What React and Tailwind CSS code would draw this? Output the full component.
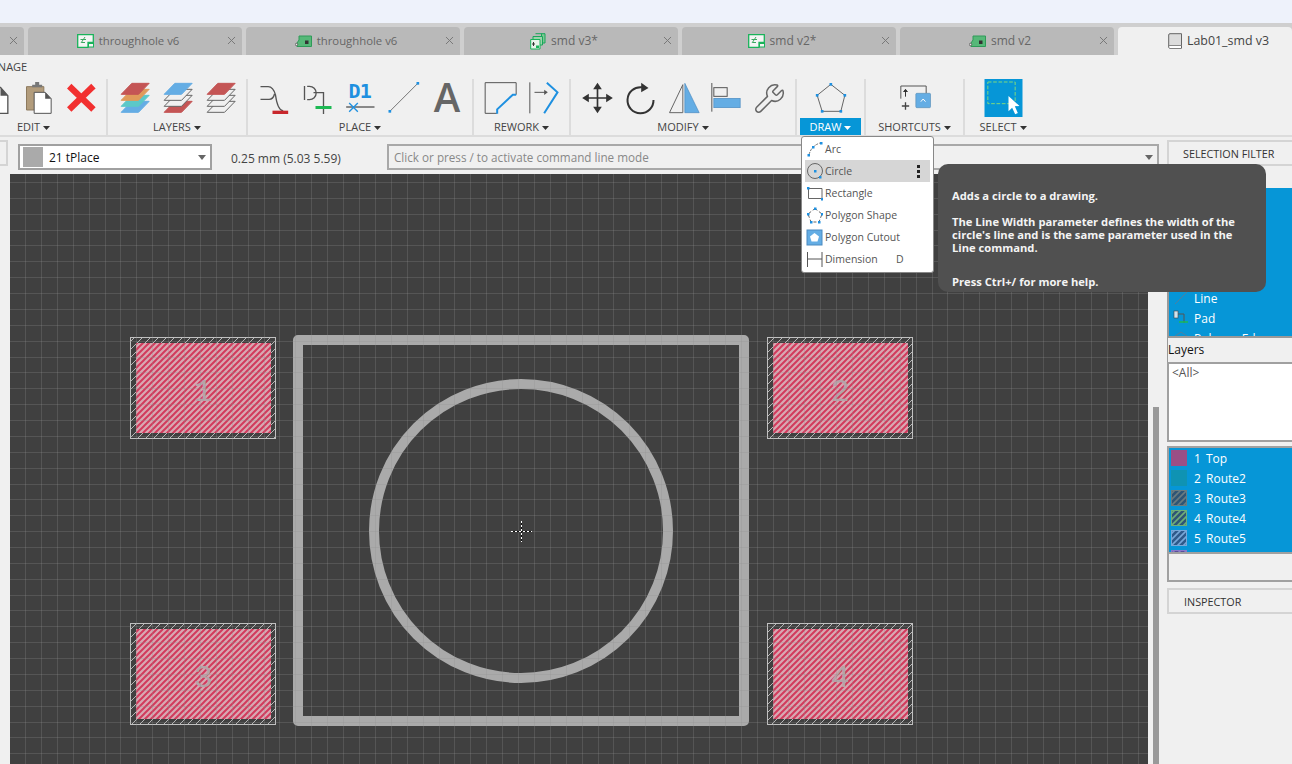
import { X, Wrench } from "lucide-react";

const blue = "#1e90e0";

function Caret({ color = "#333" }) {
  return (
    <svg width="7" height="4" viewBox="0 0 7 4" className="ml-[3px] shrink-0">
      <path d="M0 0H7L3.5 4Z" fill={color} />
    </svg>
  );
}

// icons are traced from a 3x crop, so ox is the crop's left edge in page px
function Icon({ cx, ox = 0, children }) {
  const vx = (cx - 21.5 - ox) * 3;
  return (
    <svg width="43" height="38" viewBox={`${vx} 237 129 114`} className="shrink-0 overflow-visible">
      {children}
    </svg>
  );
}

function Sheet({ x, y, fill }) {
  const d = `M${x + 32} ${y}H${x + 84}L${x + 52} ${y + 33}H${x}Z`;
  return <path d={d} fill={fill === "none" ? "#f0f0f0" : fill} stroke={fill === "none" ? "#666" : fill} strokeWidth="3" />;
}

function Square({ x, y, s = 8 }) {
  return <rect x={x - s / 2} y={y - s / 2} width={s} height={s} fill={blue} />;
}

function SchIcon() {
  return (
    <svg width="17" height="14" viewBox="0 0 17 14" className="shrink-0">
      <path d="M.7.7H16.3V8.5H11V13.3H.7Z" fill="#f4f4f4" stroke="#19b35a" strokeWidth="1.3" />
      <rect x="11.5" y="9.5" width="5" height="3.5" fill="#f4f4f4" stroke="#19b35a" />
      <path d="M4 9L8 3M3.5 5.5H9M5 8.5H8" stroke="#3aa860" strokeWidth="1" fill="none" />
    </svg>
  );
}

function BoardIcon() {
  return (
    <svg width="17" height="13" viewBox="0 0 17 13" className="shrink-0">
      <path d="M4 1H16.5V11.5H2V8L4 5Z" fill="#56b878" stroke="#2f9a58" />
      <rect x="10" y="5.5" width="3.5" height="3.5" fill="#333" />
      <circle cx="1.5" cy="9.5" r="1.2" fill="#eee" stroke="#444" strokeWidth=".7" />
    </svg>
  );
}

function StackIcon() {
  return (
    <svg width="16" height="17" viewBox="0 0 16 17" className="shrink-0">
      <path d="M5.5.7H15V10H11.5V.7" fill="#7dc893" stroke="#19a65a" />
      <path d="M3 3.5H12.5V12H3Z" fill="#9ed2ac" stroke="#19a65a" />
      <path d="M.7 6.5H10V16H.7Z" fill="#e8f3ea" stroke="#19b35a" />
      <path d="M3.5 9V13M2 11H5" stroke="#333" fill="none" />
      <rect x="6" y="12.5" width="3" height="2.5" fill="#19b35a" />
    </svg>
  );
}

function DocIcon() {
  return (
    <svg width="15" height="16" viewBox="0 0 15 16" className="shrink-0">
      <path d="M2 .7H13.5V15.3H2Q.7 15.3.7 14V2Q.7.7 2 .7Z" fill="#dcdcdc" stroke="#666" />
      <path d="M1 12.5H13.5" stroke="#888" />
      <rect x="1.5" y="13" width="11.5" height="2" fill="#fff" />
    </svg>
  );
}

const tabs = [
  { name: "", icon: null },
  { name: "throughhole v6", icon: <SchIcon />, long: true },
  { name: "throughhole v6", icon: <BoardIcon />, long: true },
  { name: "smd v3*", icon: <StackIcon /> },
  { name: "smd v2*", icon: <SchIcon /> },
  { name: "smd v2", icon: <BoardIcon /> },
];

function Tab({ name, icon, long }) {
  return (
    <div className="relative flex h-[28px] w-[214px] shrink-0 items-center justify-center gap-[5px] rounded-t-[4px] bg-[#b9b9b9] pr-[14px]">
      {icon}
      <span className={long ? "text-[11.35px] text-[#666]" : "text-[12px] text-[#666]"}>{name}</span>
      <X size={13} strokeWidth={1.8} className="absolute right-[4px] top-[7px] text-[#777]" />
    </div>
  );
}

function Group({ width, label, active, shift = 0, children }) {
  return (
    <div className="flex shrink-0 flex-col items-center border-r-2 border-[#dcdcdc] last:border-r-0" style={{ width }}>
      <div className="flex h-[39px] items-start justify-center" style={{ paddingLeft: shift }}>
        {children}
      </div>
      {active ? (
        <div className="flex h-[18px] w-[61px] items-center justify-center bg-[#0696d7] pt-px text-[11px] text-white">
          {label}
          <Caret color="#fff" />
        </div>
      ) : (
        <div className="flex h-[18px] items-center pt-px text-[11px] text-[#444]">
          {label}
          <Caret />
        </div>
      )}
    </div>
  );
}

function Ribbon() {
  return (
    <div className="h-[82px] shrink-0 overflow-hidden border-b-2 border-[#dcdcdc] bg-[#f0f0f0]">
      <div className="-ml-[19px] h-[24px] pt-[4px] text-[11px] text-[#444]">MANAGE</div>
      <div className="-ml-[39px] flex">
        <Group width={147} label="EDIT" shift={10}>
          <Icon cx={-5}>
            <path d="M-30 262H0L22 287V340H-30Z" fill="#fff" stroke="#555" strokeWidth="4" />
            <path d="M0 262L22 287H0Z" fill="#555" />
          </Icon>
          <Icon cx={38}>
            <path d="M78 260H130V330H78Z" fill="#b29c7c" stroke="#8d7a5e" strokeWidth="3" />
            <path d="M95 262V254H104V246H116V254H125V262Z" fill="#777" />
            <path d="M101 277H134L152 296V340H101Z" fill="#fff" stroke="#555" strokeWidth="3" />
            <path d="M134 277L152 296H134Z" fill="#555" />
          </Icon>
          <Icon cx={81}>
            <path d="M213 265L272 322M272 265L213 322" stroke="#f23030" strokeWidth="19" strokeLinecap="square" />
          </Icon>
        </Group>
        <Group width={140} label="LAYERS">
          <Icon cx={135}>
            <Sheet x={365} y={304} fill="#64ade4" />
            <Sheet x={365} y={286} fill="#5cc8c8" />
            <Sheet x={365} y={268} fill="#e09a5a" />
            <Sheet x={365} y={250} fill="#c45555" />
          </Icon>
          <Icon cx={178}>
            <Sheet x={494} y={304} fill="#c45555" />
            <Sheet x={494} y={286} fill="none" />
            <Sheet x={494} y={268} fill="none" />
            <Sheet x={494} y={250} fill="#64ade4" />
          </Icon>
          <Icon cx={221}>
            <Sheet x={623} y={304} fill="none" />
            <Sheet x={623} y={286} fill="none" />
            <Sheet x={623} y={268} fill="none" />
            <Sheet x={623} y={250} fill="#c45555" />
          </Icon>
        </Group>
        <Group width={226} label="PLACE">
          <Icon cx={273}>
            <path d="M777 260H800Q815 260 822 285Q828 330 845 333M777 298H803Q815 298 819 282" fill="none" stroke="#555" strokeWidth="4" />
            <rect x="813" y="332" width="47" height="10" fill="#c8272c" />
          </Icon>
          <Icon cx={316}>
            <path d="M909 258V300M917 259H924A20 20 0 0 1 924 299H917M936 278H966V342" fill="none" stroke="#555" strokeWidth="4" />
            <rect x="942" y="318" width="48" height="9" fill="#1db954" />
          </Icon>
          <Icon cx={361}>
            <text x="1047" y="294" fontFamily="DejaVu Sans Mono" fontWeight="700" fontSize="60" fill={blue} textLength="70">D1</text>
            <path d="M1040 321H1125" stroke="#555" strokeWidth="4" />
            <path d="M1049 309L1075 335M1075 309L1049 335" stroke={blue} strokeWidth="4" />
          </Icon>
          <Icon cx={403}>
            <path d="M1168 334L1252 250" stroke="#777" strokeWidth="3" />
            <Square x={1168} y={334} />
            <Square x={1252} y={250} />
          </Icon>
          <Icon cx={447}>
            <text x="1303" y="336" fontFamily="Open Sans" fontWeight="600" fontSize="120" fill="#666">A</text>
          </Icon>
        </Group>
        <Group width={97} label="REWORK">
          <Icon cx={501} ox={460}>
            <path d="M170 284V248H77V340H112" fill="none" stroke="#555" strokeWidth="3" />
            <path d="M113 341V328L160 284H170" fill="none" stroke={blue} strokeWidth="6" />
          </Icon>
          <Icon cx={544} ox={460}>
            <path d="M211 247V340M225 277H258" fill="none" stroke="#555" strokeWidth="3" />
            <path d="M254 269L265 277L254 285Z" fill="#555" />
            <path d="M262 248L294 277L254 340" fill="none" stroke={blue} strokeWidth="6" />
          </Icon>
        </Group>
        <Group width={226} label="MODIFY">
          <Icon cx={598} ox={460}>
            <path d="M414 262V326M382 294H446" stroke="#333" strokeWidth="5" />
            <path d="M414 248L427 268H401ZM414 340L427 320H401ZM368 294L388 281V307ZM460 294L440 281V307Z" fill="#333" />
          </Icon>
          <Icon cx={641} ox={460}>
            <path d="M547 262A39 39 0 1 0 582 300" fill="none" stroke="#333" strokeWidth="6" />
            <path d="M545 248L567 264L545 277Z" fill="#333" />
          </Icon>
          <Icon cx={683} ox={460}>
            <path d="M667 254V338H627Z" fill="none" stroke="#666" strokeWidth="3" />
            <path d="M673 250V338H716Z" fill="#64ade4" stroke="#4a8ac0" strokeWidth="2" />
          </Icon>
          <Icon cx={727} ox={460}>
            <path d="M757 249V335" stroke="#555" strokeWidth="3" />
            <rect x="763" y="263" width="40" height="26" fill="none" stroke="#555" strokeWidth="3" />
            <rect x="763" y="295" width="79" height="28" fill="#64ade4" stroke="#4a8ac0" strokeWidth="2" />
          </Icon>
          <div className="flex h-[38px] w-[43px] items-center justify-center">
            <Wrench size={33} strokeWidth={1.1} className="text-[#666]" />
          </div>
        </Group>
        <Group width={69} label="DRAW" active>
          <Icon cx={830} ox={780}>
            <path d="M151 253L193 286L181 334H125L110 286Z" fill="none" stroke="#666" strokeWidth="3" />
            <Square x={151} y={253} />
            <Square x={193} y={286} />
            <Square x={181} y={334} />
            <Square x={125} y={334} />
            <Square x={110} y={286} />
          </Icon>
        </Group>
        <Group width={99} label="SHORTCUTS">
          <Icon cx={914} ox={780}>
            <path d="M361 296V258H437V280" fill="none" stroke="#555" strokeWidth="3" />
            <path d="M375 290V275M369 276L375 268L381 276" fill="#333" stroke="#333" strokeWidth="3" />
            <path d="M364 318H386M375 307V329" stroke="#444" strokeWidth="4" />
            <rect x="406" y="280" width="44" height="43" rx="3" fill="#64ade4" stroke="#5a90b8" strokeWidth="2" />
            <path d="M421 305L428 297L435 305" fill="none" stroke="#fff" strokeWidth="3" />
          </Icon>
        </Group>
        <Group width={76} label="SELECT">
          <Icon cx={1002} ox={780}>
            <rect x="609" y="237" width="114" height="114" fill="#0696d7" />
            <rect x="619" y="246" width="82" height="65" fill="none" stroke="#7ed87e" strokeWidth="3" strokeDasharray="11 5" />
            <path d="M681 288V334L692 323L701 343L709 339L700 319L714 318Z" fill="#fff" />
          </Icon>
        </Group>
      </div>
    </div>
  );
}

function CommandRow() {
  return (
    <div className="flex h-[37px] shrink-0 items-start bg-[#f0f0f0] pt-[7px]">
      <div className="-mt-[4px] h-[26px] w-[8px] shrink-0 border-2 border-l-0 border-[#d4d4d4]" />
      <div className="ml-[10px] flex h-[26px] w-[194px] shrink-0 items-center border-2 border-[#a0a0a0] bg-white pl-[3px] pr-[4px]">
        <div className="h-[20px] w-[20px] bg-[#aaaaaa]" />
        <span className="ml-[6px] flex-1 pt-px text-[12px] text-[#111]">21 tPlace</span>
        <svg width="8" height="5" viewBox="0 0 8 5"><path d="M0 0H8L4 5Z" fill="#666" /></svg>
      </div>
      <span className="ml-[19px] w-[156px] shrink-0 pt-[6px] text-[12px] text-[#444]">0.25 mm (5.03 5.59)</span>
      <div className="flex h-[26px] w-[772px] shrink-0 items-center border-2 border-[#a8a8a8] pl-[5px] pr-[4px]">
        <span className="flex-1 pt-px text-[11.7px] text-[#888]">Click or press / to activate command line mode</span>
        <svg width="8" height="5" viewBox="0 0 8 5"><path d="M0 0H8L4 5Z" fill="#666" /></svg>
      </div>
    </div>
  );
}

function Pad({ x, y, label }) {
  return (
    <g>
      <rect x={x + 0.5} y={y + 0.5} width="145" height="101" fill="url(#ring)" stroke="#c0c0c0" />
      <rect x={x + 6} y={y + 6} width="135" height="90" fill="url(#pad)" />
      <text x={x + 73} y={y + 64} textAnchor="middle" fontFamily="Liberation Mono" fontSize="32" fill="#b5a3a8">{label}</text>
    </g>
  );
}

function Board() {
  const xs = Array.from({ length: 73 }, (_, i) => Math.round(25 + i * 15.905));
  const ys = Array.from({ length: 38 }, (_, i) => Math.round(182 + i * 15.87));
  return (
    <svg width="1138" height="590" viewBox="10 174 1138 590" className="block">
      <defs>
        <pattern id="pad" width="6" height="6" patternUnits="userSpaceOnUse">
          <rect width="6" height="6" fill="#d8a8b2" />
          <path d="M-1.5 1.5L1.5 -1.5M0 6L6 0M4.5 7.5L7.5 4.5" stroke="#d23a5c" strokeWidth="2" />
        </pattern>
        <pattern id="ring" width="8" height="8" patternUnits="userSpaceOnUse">
          <rect width="8" height="8" fill="#404040" />
          <path d="M0 8L8 0" stroke="#b8b8b8" strokeWidth="1" />
        </pattern>
      </defs>
      <rect x="10" y="174" width="1138" height="590" fill="#404040" />
      <Pad x={130} y={337} label="1" />
      <Pad x={767} y={337} label="2" />
      <Pad x={130} y={623} label="3" />
      <Pad x={767} y={623} label="4" />
      <rect x="298" y="340" width="446" height="381" fill="none" stroke="#aaaaaa" strokeWidth="10" strokeLinejoin="round" />
      <circle cx="521" cy="531" r="147" fill="none" stroke="#aaaaaa" strokeWidth="10" />
      <g stroke="#909090" strokeOpacity="0.27" shapeRendering="crispEdges">
        {xs.map((x) => <path key={x} d={`M${x + 0.5} 174V764`} />)}
        {ys.map((y) => <path key={y} d={`M10 ${y + 0.5}H1148`} />)}
      </g>
      <path d="M511 531.5H532M521.5 521V542" stroke="#111" shapeRendering="crispEdges" />
      <path d="M511 531.5H532M521.5 521V542" stroke="#fff" strokeDasharray="2 2" shapeRendering="crispEdges" />
    </svg>
  );
}

function Hatch({ bg, line }) {
  return (
    <svg width="16" height="16" viewBox="0 0 16 16" className="shrink-0">
      <rect width="16" height="16" fill={bg} />
      <path d="M-1 5L5 -1M-1 11L11 -1M-1 17L17 -1M5 17L17 5M11 17L17 11" stroke={line} strokeWidth="1.6" />
      <rect x=".5" y=".5" width="15" height="15" fill="none" stroke={line} />
    </svg>
  );
}

const layers = [
  { id: "1", name: "Top", swatch: <div className="h-[16px] w-[16px] shrink-0 bg-[#9a4f86]" /> },
  { id: "2", name: "Route2", swatch: <div className="h-[16px] w-[16px] shrink-0 bg-[#0f93b3]" /> },
  { id: "3", name: "Route3", swatch: <Hatch bg="#2f5575" line="#6a7c80" /> },
  { id: "4", name: "Route4", swatch: <Hatch bg="#2f5575" line="#6fae7a" /> },
  { id: "5", name: "Route5", swatch: <Hatch bg="#2f5a8a" line="#78a8d8" /> },
  { id: "6", name: "Route6", swatch: <Hatch bg="#5a4f9a" line="#8a7ac8" /> },
];

function Panel() {
  return (
    <div className="flex w-[125px] shrink-0 flex-col bg-[#f0f0f0] pt-[3px] text-[12px]">
      <div className="flex h-[26px] shrink-0 items-center border-2 border-r-0 border-[#d4d4d4] pl-[14px] pt-[2px] text-[10.8px] text-[#333]">SELECTION FILTER</div>
      <div className="mt-[22px] h-[150px] shrink-0 overflow-hidden border-b-2 border-l-2 border-[#999] bg-[#0696d7] pt-[100px] text-white">
        <div className="flex h-[20px] items-center pl-[4px]">
          <svg width="16" height="16" viewBox="0 0 16 16" className="shrink-0"><path d="M2 14L14 2" stroke="#4f7f9f" /></svg>
          <span className="ml-[5px] pt-[2px]">Line</span>
        </div>
        <div className="flex h-[20px] items-center pl-[4px]">
          <svg width="16" height="16" viewBox="0 0 16 16" className="shrink-0">
            <rect x="1" y="1" width="4" height="7" fill="#cfe3ee" stroke="#444" strokeWidth=".6" />
            <path d="M5 4H11V13" fill="none" stroke="#555" />
            <path d="M6 12H15" stroke="#1db954" strokeWidth="1.5" />
          </svg>
          <span className="ml-[5px] pt-[2px]">Pad</span>
        </div>
        <div className="flex h-[20px] items-center pl-[4px]">
          <svg width="16" height="16" viewBox="0 0 16 16" className="shrink-0"><path d="M2 6L8 2L14 6" fill="none" stroke="#4f7f9f" /></svg>
          <span className="ml-[5px] pt-[2px]">Polygon Edge</span>
        </div>
      </div>
      <div className="flex h-[24px] shrink-0 items-center border-l border-[#999] text-[#111]">Layers</div>
      <div className="h-[80px] shrink-0 border-2 border-r-0 border-[#a0a0a0] bg-white pl-[3px] text-[#555]">&lt;All&gt;</div>
      <div className="mt-[4px] flex h-[136px] shrink-0 flex-col border-2 border-r-0 border-[#a0a0a0]">
        <div className="h-[104px] shrink-0 overflow-hidden bg-[#0696d7] text-white">
          {layers.map((l) => (
            <div key={l.id} className="flex h-[20px] items-center pl-[2px]">
              {l.swatch}
              <span className="ml-[7px] w-[12px] pt-[2px]">{l.id}</span>
              <span className="pt-[2px]">{l.name}</span>
            </div>
          ))}
        </div>
        <div className="h-[2px] bg-[#a0a0a0]" />
      </div>
      <div className="mt-[6px] flex h-[26px] shrink-0 items-center border-2 border-r-0 border-[#d4d4d4] pl-[15px] pt-[2px] text-[10.8px] text-[#333]">INSPECTOR</div>
    </div>
  );
}

const menu = [
  {
    name: "Arc",
    icon: (
      <>
        <path d="M3 14Q5 5 14 2" fill="none" stroke="#777" strokeDasharray="3 1" />
        <rect x="1.5" y="13" width="2.5" height="2.5" fill={blue} />
        <rect x="6" y="5" width="2.5" height="2.5" fill={blue} />
        <rect x="14" y="1" width="2.5" height="2.5" fill={blue} />
      </>
    ),
  },
  {
    name: "Circle",
    active: true,
    icon: (
      <>
        <circle cx="9" cy="8" r="7.5" fill="none" stroke="#666" />
        <rect x="8" y="7" width="2.5" height="2.5" fill={blue} />
        <rect x="13" y="13" width="2.5" height="2.5" fill={blue} />
      </>
    ),
  },
  {
    name: "Rectangle",
    icon: (
      <>
        <path d="M2.5 3.5H16V13.5H2.5Z" fill="none" stroke="#666" />
        <rect x="1" y="2" width="2.5" height="2.5" fill={blue} />
        <rect x="15" y="13" width="2.5" height="2.5" fill={blue} />
      </>
    ),
  },
  {
    name: "Polygon Shape",
    icon: (
      <>
        <path d="M9 1.5L16 7L13 15H5L2 7Z" fill="none" stroke="#666" strokeDasharray="3 2" />
        <rect x="8" y="0.5" width="2.5" height="2.5" fill={blue} />
        <rect x="15" y="6" width="2.5" height="2.5" fill={blue} />
        <rect x="1" y="6" width="2.5" height="2.5" fill={blue} />
        <rect x="12" y="14" width="2.5" height="2.5" fill={blue} />
        <rect x="4" y="14" width="2.5" height="2.5" fill={blue} />
      </>
    ),
  },
  {
    name: "Polygon Cutout",
    icon: (
      <>
        <rect x="1" y="1" width="15" height="15" fill="#64ade4" stroke="#4a8ac0" />
        <path d="M8.5 4L13 7.5L11.5 12.5H5.5L4 7.5Z" fill="#fff" />
      </>
    ),
  },
  {
    name: "Dimension",
    hint: "D",
    icon: <path d="M1.5 1V16M16 1V16M1.5 8H16" fill="none" stroke="#555" />,
  },
];

function DrawMenu() {
  return (
    <div className="absolute left-[801px] top-[136px] h-[137px] w-[133px] rounded-[3px] border border-[#888] bg-white pl-[3px] pt-[1px] text-[10.5px] text-[#555]">
      {menu.map((m) => (
        <div key={m.name} className={`flex h-[22px] w-[125px] items-center ${m.active ? "bg-[#d6d6d6]" : ""}`}>
          <svg width="17" height="17" viewBox="0 0 17 17" className="ml-[1px] shrink-0">{m.icon}</svg>
          <span className="ml-[2px] w-[71px] whitespace-nowrap pt-[2px]">{m.name}</span>
          {m.hint && <span className="pt-[2px]">{m.hint}</span>}
          {m.active && (
            <div className="ml-[21px] flex flex-col gap-[2px]">
              <div className="h-[3px] w-[3px] bg-[#222]" />
              <div className="h-[3px] w-[3px] bg-[#222]" />
              <div className="h-[3px] w-[3px] bg-[#222]" />
            </div>
          )}
        </div>
      ))}
    </div>
  );
}

function Tooltip() {
  return (
    <div className="absolute left-[938px] top-[164px] h-[128px] w-[328px] rounded-[10px] bg-[#505050] px-[14px] pt-[25px] text-[11.2px] font-bold leading-[13px] text-[#f4f4f4]">
      <p>Adds a circle to a drawing.</p>
      <p className="mt-[13px]">The Line Width parameter defines the width of the<br />circle's line and is the same parameter used in the<br />Line command.</p>
      <p className="mt-[21px]">Press Ctrl+/ for more help.</p>
    </div>
  );
}

export default function App() {
  return (
    <div className="relative flex h-[764px] w-[1292px] flex-col overflow-hidden bg-[#f0f0f0] font-['Open_Sans',sans-serif]">
      <div className="h-[23px] shrink-0 bg-[#eef2fb]" />
      <div className="h-[32px] shrink-0 bg-[#cfcfcf] pt-[4px]">
        <div className="-ml-[190px] flex gap-[4px]">
          {tabs.map((t, i) => <Tab key={i} name={t.name} icon={t.icon} long={t.long} />)}
          <div className="flex h-[28px] flex-1 items-center gap-[4px] rounded-t-[4px] bg-[#f0f0f0] pl-[50px]">
            <DocIcon />
            <span className="text-[12.4px] text-[#444]">Lab01_smd v3</span>
          </div>
        </div>
      </div>
      <Ribbon />
      <div className="flex min-h-0 flex-1">
        <div className="flex w-[1167px] shrink-0 flex-col">
          <CommandRow />
          <div className="flex min-h-0 flex-1">
            <div className="ml-[10px]"><Board /></div>
            <div className="ml-[5px] mt-[233px] w-[6px] bg-[#999]" />
          </div>
        </div>
        <Panel />
      </div>
      <DrawMenu />
      <Tooltip />
    </div>
  );
}
